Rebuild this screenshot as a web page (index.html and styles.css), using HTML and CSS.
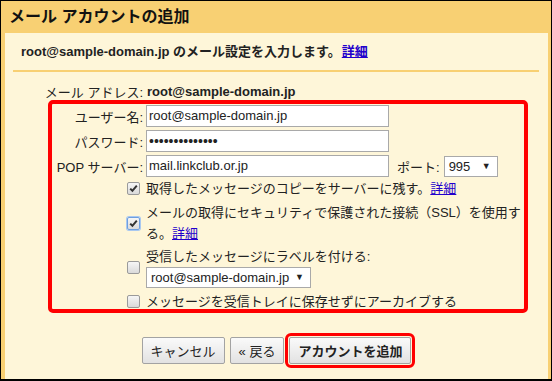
FILE: index.html
```html
<!DOCTYPE html>
<html lang="ja">
<head>
    <meta charset="UTF-8">
    <title>メール アカウントの追加</title>
    <link rel="stylesheet" href="styles.css">
</head>
<body>

<div class="window">
    <h1 class="windowTitle">メール アカウントの追加</h1>

    <div class="panel">
        <p class="intro">root@sample-domain.jp のメール設定を入力します。<a href="#">詳細</a></p>
        <hr class="divider">

        <div class="formGrid">
            <span class="label">メール アドレス:</span>
            <span class="value">root@sample-domain.jp</span>

            <span class="label">ユーザー名:</span>
            <div class="field">root@sample-domain.jp</div>

            <span class="label">パスワード:</span>
            <div class="field password">••••••••••••••</div>

            <span class="label">POP サーバー:</span>
            <div class="serverRow">
                <div class="field">mail.linkclub.or.jp</div>
                <span class="portLabel">ポート:</span>
                <div class="select portSelect"><span>995</span><span class="arrow">▼</span></div>
            </div>
        </div>

        <ul class="options">
            <li class="option">
                <span class="check checked"></span>
                <span class="optionText">取得したメッセージのコピーをサーバーに残す。<a href="#">詳細</a></span>
            </li>
            <li class="option">
                <span class="check checked focused"></span>
                <span class="optionText">メールの取得にセキュリティで保護された接続（SSL）を使用する。<a href="#">詳細</a></span>
            </li>
            <li class="option">
                <span class="check"></span>
                <div class="optionText">
                    <div class="labelLine">受信したメッセージにラベルを付ける:</div>
                    <div class="select labelSelect"><span>root@sample-domain.jp</span><span class="arrow">▼</span></div>
                </div>
            </li>
            <li class="option">
                <span class="check"></span>
                <span class="optionText">メッセージを受信トレイに保存せずにアーカイブする</span>
            </li>
        </ul>

        <div class="actions">
            <button class="btn">キャンセル</button>
            <button class="btn">« 戻る</button>
            <button class="btn primary">アカウントを追加</button>
        </div>
    </div>

    <!-- annotation frame over the settings -->
    <div class="highlight"></div>
</div>

</body>
</html>
```

FILE: styles.css
```css
html, body {
    margin: 0;
    padding: 0;
}
body {
    font-family: 'Liberation Sans', 'Noto Sans CJK JP', sans-serif;
    font-size: 13px;
    color: #222;
    background-color: #fff;
}
a {
    color: #2200cc;
}

.window {
    position: relative;
    width: 552px;
    height: 381px;
    box-sizing: border-box;
    border: 1px solid #000;
    border-bottom-width: 2px;
    background-color: #f8d073;
    display: flex;
    flex-direction: column;
}
.windowTitle {
    margin: 0;
    padding-left: 8px;
    height: 32px;
    line-height: 32px;
    font-size: 16px;
    font-weight: bold;
    color: #111;
}

.panel {
    flex: 1;
    margin: 0 3px 0 4px;
    background-color: #fef6d9;
    display: flex;
    flex-direction: column;
}
.intro {
    margin: 0;
    padding: 10px 0 0 16px;
    line-height: 18px;
    font-weight: bold;
}
.intro a {
    margin-left: 1px;
}
.divider {
    margin: 9px 9px 0 8px;
    border: 0;
    border-top: 2px solid #f8d073;
    height: 0;
}

/* labels + inputs */
.formGrid {
    margin-top: 8px;
    display: grid;
    grid-template-columns: 138px auto;
    grid-auto-rows: 22px;
    column-gap: 3px;
    row-gap: 3px;
    align-items: center;
}
.label {
    text-align: right;
}
.value {
    font-weight: bold;
    padding-left: 1px;
}
.field {
    width: 243px;
    height: 22px;
    box-sizing: border-box;
    border: 1px solid #a9a9a9;
    background-color: #fff;
    padding: 0 2px;
    line-height: 20px;
    white-space: nowrap;
}
.password {
    font-size: 14px;
}
.serverRow {
    display: flex;
    align-items: center;
}
.portLabel {
    margin: 0 4px 0 8px;
}
.select {
    height: 21px;
    box-sizing: border-box;
    border: 1px solid #a9a9a9;
    background-color: #fff;
    display: flex;
    align-items: center;
    justify-content: space-between;
    padding: 0 6px 0 4px;
}
.portSelect {
    width: 54px;
}
.labelSelect {
    width: 165px;
}
.arrow {
    font-size: 9px;
}

/* checkbox rows */
.options {
    list-style: none;
    margin: 1px 0 0 0;
    padding: 0 24px 0 122px;
    display: flex;
    flex-direction: column;
    gap: 3px;
}
.option {
    display: flex;
    align-items: center;
    gap: 6px;
    line-height: 21px;
}
.optionText a {
    display: inline-block;
    line-height: 19px;
}
.labelLine {
    line-height: 20px;
}
.check {
    flex: none;
    width: 13px;
    height: 13px;
    box-sizing: border-box;
    border: 1px solid #9a9a9a;
    border-radius: 2px;
    background: linear-gradient(#f6f6f6, #dadada);
    background-position: center;
    background-repeat: no-repeat;
}
.checked {
    background-image: url("data:image/svg+xml,%3Csvg xmlns='http://www.w3.org/2000/svg' width='11' height='11' viewBox='0 0 11 11'%3E%3Cpath d='M2.2 5.6 L4.4 7.8 L8.8 2.6' fill='none' stroke='%23333' stroke-width='2'/%3E%3C/svg%3E"), linear-gradient(#f6f6f6, #dadada);
}
.focused {
    border-color: #6e9fe0;
    box-shadow: 0 0 0 1px #a9c8f0;
}

/* buttons */
.actions {
    margin-top: 25px;
    display: flex;
    justify-content: center;
    gap: 5px;
}
.btn {
    height: 27px;
    padding: 0 8px;
    font-family: inherit;
    font-size: 13px;
    color: #222;
    border: 1px solid #a3a3a3;
    border-radius: 2px;
    background: linear-gradient(#fafafa, #e2e2e2);
}
.primary {
    position: relative;
    font-weight: bold;
}
.primary::after {
    content: '';
    position: absolute;
    top: -5px;
    left: -5px;
    right: -5px;
    bottom: -5px;
    border: 3px solid #ff0000;
    border-radius: 6px;
}

.highlight {
    position: absolute;
    left: 47px;
    top: 99px;
    width: 480px;
    height: 213px;
    box-sizing: border-box;
    border: 4px solid #ff0000;
    border-radius: 5px;
}
```
